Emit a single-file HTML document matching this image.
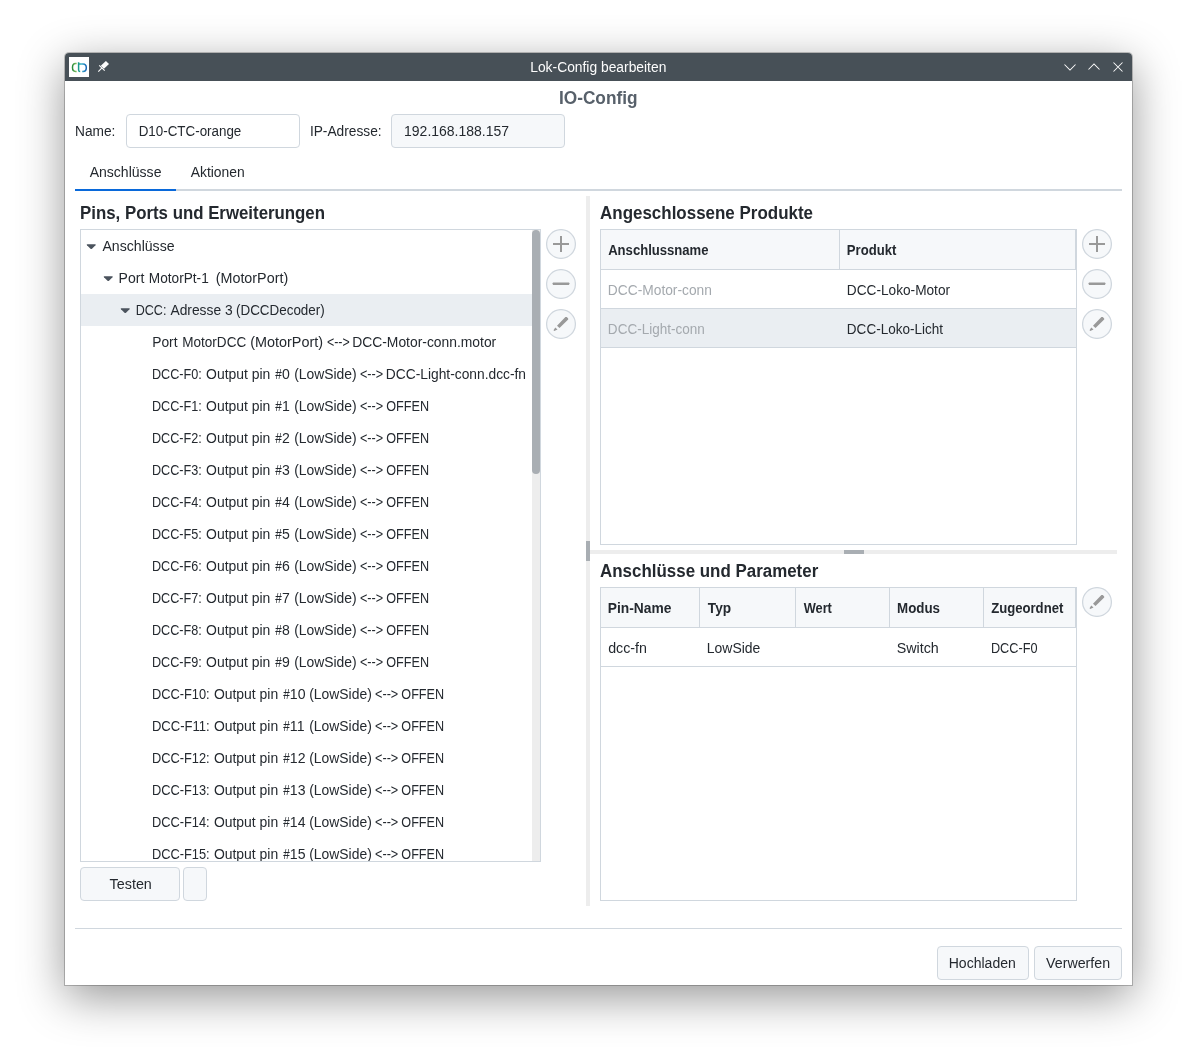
<!DOCTYPE html>
<html lang="de">
<head>
<meta charset="utf-8">
<title>Lok-Config bearbeiten</title>
<style>
*{box-sizing:border-box;margin:0;padding:0}
html,body{width:1197px;height:1062px;overflow:hidden;background:#fff}
body{position:relative;font-family:"Liberation Sans",sans-serif;font-size:14px;line-height:20px;color:#24292f}
div,span,svg{position:absolute}
.win{left:65px;top:53px;width:1067px;height:932px;background:#fff;border-radius:4px 4px 0 0;
 box-shadow:0 0 0 1px rgba(0,0,0,.22),0 12px 46px rgba(0,0,0,.42)}
.tbar{left:65px;top:53px;width:1067px;height:28px;background:#475057;border-radius:4px 4px 0 0}
.t{white-space:pre;line-height:20px;transform-origin:0 0}
.r{font-size:14px}
.b{font-size:14px;font-weight:bold}
.h{font-size:17.5px;font-weight:bold}
.tt{font-size:13.8px}
.inp{border:1px solid #d0d7de;border-radius:4px;background:#fff}
.btn{border:1px solid #d0d7de;border-radius:4px;background:#f6f8fa}
.box{border:1px solid #d0d7de;background:#fff}
.circ{width:30px;height:30px;border-radius:50%;border:1px solid #d0d7de;background:#f6f8fa}
.circ svg{left:-1px;top:-1px}
.sel{background:#eaeef2}
.th{height:40px;background:#f6f8fa;border-bottom:1px solid #d0d7de;border-right:1px solid #d0d7de}
.hl{height:1px;background:#d0d7de}
.arr{width:11px;height:6px}
.row{left:0;width:451px;height:32px}
</style>
</head>
<body>
<div class="win"></div>
<div class="tbar"></div>
<div style="left:69px;top:57px;width:20px;height:20px;background:#fff">
 <svg width="20" height="20" viewBox="0 0 20 20" style="left:0;top:0">
  <defs>
   <linearGradient id="g1" x1="0" y1="0" x2="1" y2="0"><stop offset="0" stop-color="#2a8c3c"/><stop offset="1" stop-color="#8cc663"/></linearGradient>
   <linearGradient id="g2" x1="0" y1="0" x2="1" y2="0"><stop offset="0" stop-color="#1a9a8c"/><stop offset=".35" stop-color="#3db4c8"/><stop offset="1" stop-color="#1766b8"/></linearGradient>
  </defs>
  <path d="M7.7 6.6 H6.6 Q3.5 6.6 3.5 10.6 Q3.5 14.5 6.6 14.5 H7.7" fill="none" stroke="url(#g1)" stroke-width="1.5"/>
  <path d="M9.6 5.2 V12.9 Q9.6 14.5 11.2 14.5" fill="none" stroke="#1a9a8c" stroke-width="1.5"/>
  <path d="M9.6 6.9 H14 Q17.3 6.9 17.3 10.7 Q17.3 14.5 14 14.5 H13.2" fill="none" stroke="url(#g2)" stroke-width="1.5"/>
 </svg>
</div>
<svg width="16" height="16" viewBox="0 0 16 16" style="left:96px;top:58px">
 <path d="M9.9 3.1 L13 6 L7.95 10.7 L4.8 7.75 Z" fill="#fcfcfc"/>
 <path d="M3.2 7.4 L8.7 12.65 M5.7 10.2 L2.3 13.6" stroke="#fcfcfc" stroke-width="1.1" fill="none"/>
</svg>
<svg width="70" height="16" viewBox="0 0 70 16" style="left:1060px;top:59px">
 <g fill="none" stroke="#fcfcfc" stroke-width="1.05">
  <path d="M4.5 5.5 L10 11 L15.5 5.5"/>
  <path d="M28.5 10.5 L34 5 L39.5 10.5"/>
  <path d="M53.5 3.5 L62.5 12.5 M62.5 3.5 L53.5 12.5"/>
 </g>
</svg>

<!-- inputs -->
<div class="inp" style="left:126px;top:114px;width:174px;height:34px"></div>
<div class="inp" style="left:391px;top:114px;width:174px;height:34px;background:#f6f8fa"></div>
<!-- tabs underline -->
<div style="left:75px;top:189px;width:1047px;height:2px;background:#d0d7de"></div>
<div style="left:75px;top:189px;width:101px;height:2px;background:#0969da"></div>

<!-- tree -->
<div class="box" style="left:80px;top:229px;width:461px;height:633px"></div>
<div style="left:81px;top:230px;width:459px;height:631px;overflow:hidden;will-change:transform">
 <div class="sel" style="left:0;top:64px;width:451px;height:32px"></div>
 <svg class="arr" style="left:5px;top:14px" viewBox="0 0 11 6"><path d="M1.4 .3 H9.1 Q10.3 .4 9.5 1.3 L6 4.7 Q5.25 5.3 4.5 4.7 L1 1.3 Q.2 .4 1.4 .3Z" fill="#4b535d"/></svg>
 <svg class="arr" style="left:22px;top:46px" viewBox="0 0 11 6"><path d="M1.4 .3 H9.1 Q10.3 .4 9.5 1.3 L6 4.7 Q5.25 5.3 4.5 4.7 L1 1.3 Q.2 .4 1.4 .3Z" fill="#4b535d"/></svg>
 <svg class="arr" style="left:39px;top:78px" viewBox="0 0 11 6"><path d="M1.4 .3 H9.1 Q10.3 .4 9.5 1.3 L6 4.7 Q5.25 5.3 4.5 4.7 L1 1.3 Q.2 .4 1.4 .3Z" fill="#4b535d"/></svg>
<div class="row" style="top:0px">
<span class="t r" style="left:21px;top:6px;transform:translateX(0.43px) scaleX(1.0076)">Anschlüsse</span>
</div>
<div class="row" style="top:32px">
<span class="t r" style="left:37px;top:6px;transform:translateX(0.61px) scaleX(1.0029)">Port </span><span class="t r" style="left:67px;top:6px;transform:translateX(0.85px) scaleX(0.9741)">MotorPt-1 </span><span class="t r" style="left:134px;top:6px;transform:translateX(0.71px) scaleX(1.0237)">(MotorPort)</span>
</div>
<div class="row" style="top:64px">
<span class="t r" style="left:54px;top:6px;transform:translateX(0.73px) scaleX(0.8956)">DCC: </span><span class="t r" style="left:89px;top:6px;transform:translateX(0.43px) scaleX(0.9859)">Adresse 3 </span><span class="t r" style="left:154px;top:6px;transform:translateX(0.98px) scaleX(0.9585)">(DCCDecoder)</span>
</div>
<div class="row" style="top:96px">
<span class="t r" style="left:71px;top:6px;transform:translateX(0.23px) scaleX(0.9865)">Port </span><span class="t r" style="left:101px;top:6px;transform:translateX(0.25px) scaleX(0.9669)">MotorDCC </span><span class="t r" style="left:169px;top:6px;transform:translateX(0.21px) scaleX(1.0281)">(MotorPort) </span><span class="t r" style="left:245px;top:6px;transform:translateX(0.88px) scaleX(0.8863)">&lt;--&gt; </span><span class="t r" style="left:271px;top:6px;transform:translateX(0.23px) scaleX(0.9899)">DCC-Motor-conn.motor</span>
</div>
<div class="row" style="top:128px">
<span class="t r" style="left:70px;top:6px;transform:translateX(0.93px) scaleX(0.9030)">DCC-F0: </span><span class="t r" style="left:125px;top:6px;transform:translateX(0.03px) scaleX(0.9959)">Output pin </span><span class="t r" style="left:194px;top:6px;transform:translateX(0.29px) scaleX(0.8331)">#</span><span class="t r" style="left:201px;top:6px;transform:translateX(0.00px) scaleX(1.0050)">0 </span><span class="t r" style="left:213px;top:6px;transform:translateX(0.15px) scaleX(0.9917)">(LowSide) </span><span class="t r" style="left:278px;top:6px;transform:translateX(0.97px) scaleX(0.9028)">&lt;--&gt; </span><span class="t r" style="left:304px;top:6px;transform:translateX(0.83px) scaleX(0.9847)">DCC-Light-conn.dcc-fn</span>
</div>
<div class="row" style="top:160px">
<span class="t r" style="left:70px;top:6px;transform:translateX(0.93px) scaleX(0.9030)">DCC-F1: </span><span class="t r" style="left:125px;top:6px;transform:translateX(0.03px) scaleX(0.9959)">Output pin </span><span class="t r" style="left:194px;top:6px;transform:translateX(0.29px) scaleX(0.8331)">#</span><span class="t r" style="left:201px;top:6px;transform:translateX(0.00px) scaleX(1.0050)">1 </span><span class="t r" style="left:213px;top:6px;transform:translateX(0.15px) scaleX(0.9917)">(LowSide) </span><span class="t r" style="left:278px;top:6px;transform:translateX(0.97px) scaleX(0.9028)">&lt;--&gt; </span><span class="t r" style="left:305px;top:6px;transform:translateX(0.20px) scaleX(0.9027)">OFFEN</span>
</div>
<div class="row" style="top:192px">
<span class="t r" style="left:70px;top:6px;transform:translateX(0.93px) scaleX(0.9030)">DCC-F2: </span><span class="t r" style="left:125px;top:6px;transform:translateX(0.03px) scaleX(0.9959)">Output pin </span><span class="t r" style="left:194px;top:6px;transform:translateX(0.29px) scaleX(0.8331)">#</span><span class="t r" style="left:201px;top:6px;transform:translateX(0.00px) scaleX(1.0050)">2 </span><span class="t r" style="left:213px;top:6px;transform:translateX(0.15px) scaleX(0.9917)">(LowSide) </span><span class="t r" style="left:278px;top:6px;transform:translateX(0.97px) scaleX(0.9028)">&lt;--&gt; </span><span class="t r" style="left:305px;top:6px;transform:translateX(0.20px) scaleX(0.9027)">OFFEN</span>
</div>
<div class="row" style="top:224px">
<span class="t r" style="left:70px;top:6px;transform:translateX(0.93px) scaleX(0.9030)">DCC-F3: </span><span class="t r" style="left:125px;top:6px;transform:translateX(0.03px) scaleX(0.9959)">Output pin </span><span class="t r" style="left:194px;top:6px;transform:translateX(0.29px) scaleX(0.8331)">#</span><span class="t r" style="left:201px;top:6px;transform:translateX(0.00px) scaleX(1.0050)">3 </span><span class="t r" style="left:213px;top:6px;transform:translateX(0.15px) scaleX(0.9917)">(LowSide) </span><span class="t r" style="left:278px;top:6px;transform:translateX(0.97px) scaleX(0.9028)">&lt;--&gt; </span><span class="t r" style="left:305px;top:6px;transform:translateX(0.20px) scaleX(0.9027)">OFFEN</span>
</div>
<div class="row" style="top:256px">
<span class="t r" style="left:70px;top:6px;transform:translateX(0.93px) scaleX(0.9030)">DCC-F4: </span><span class="t r" style="left:125px;top:6px;transform:translateX(0.03px) scaleX(0.9959)">Output pin </span><span class="t r" style="left:194px;top:6px;transform:translateX(0.29px) scaleX(0.8331)">#</span><span class="t r" style="left:201px;top:6px;transform:translateX(0.00px) scaleX(1.0050)">4 </span><span class="t r" style="left:213px;top:6px;transform:translateX(0.15px) scaleX(0.9917)">(LowSide) </span><span class="t r" style="left:278px;top:6px;transform:translateX(0.97px) scaleX(0.9028)">&lt;--&gt; </span><span class="t r" style="left:305px;top:6px;transform:translateX(0.20px) scaleX(0.9027)">OFFEN</span>
</div>
<div class="row" style="top:288px">
<span class="t r" style="left:70px;top:6px;transform:translateX(0.93px) scaleX(0.9030)">DCC-F5: </span><span class="t r" style="left:125px;top:6px;transform:translateX(0.03px) scaleX(0.9959)">Output pin </span><span class="t r" style="left:194px;top:6px;transform:translateX(0.29px) scaleX(0.8331)">#</span><span class="t r" style="left:201px;top:6px;transform:translateX(0.00px) scaleX(1.0050)">5 </span><span class="t r" style="left:213px;top:6px;transform:translateX(0.15px) scaleX(0.9917)">(LowSide) </span><span class="t r" style="left:278px;top:6px;transform:translateX(0.97px) scaleX(0.9028)">&lt;--&gt; </span><span class="t r" style="left:305px;top:6px;transform:translateX(0.20px) scaleX(0.9027)">OFFEN</span>
</div>
<div class="row" style="top:320px">
<span class="t r" style="left:70px;top:6px;transform:translateX(0.93px) scaleX(0.9030)">DCC-F6: </span><span class="t r" style="left:125px;top:6px;transform:translateX(0.03px) scaleX(0.9959)">Output pin </span><span class="t r" style="left:194px;top:6px;transform:translateX(0.29px) scaleX(0.8331)">#</span><span class="t r" style="left:201px;top:6px;transform:translateX(0.00px) scaleX(1.0050)">6 </span><span class="t r" style="left:213px;top:6px;transform:translateX(0.15px) scaleX(0.9917)">(LowSide) </span><span class="t r" style="left:278px;top:6px;transform:translateX(0.97px) scaleX(0.9028)">&lt;--&gt; </span><span class="t r" style="left:305px;top:6px;transform:translateX(0.20px) scaleX(0.9027)">OFFEN</span>
</div>
<div class="row" style="top:352px">
<span class="t r" style="left:70px;top:6px;transform:translateX(0.93px) scaleX(0.9030)">DCC-F7: </span><span class="t r" style="left:125px;top:6px;transform:translateX(0.03px) scaleX(0.9959)">Output pin </span><span class="t r" style="left:194px;top:6px;transform:translateX(0.29px) scaleX(0.8331)">#</span><span class="t r" style="left:201px;top:6px;transform:translateX(0.00px) scaleX(1.0050)">7 </span><span class="t r" style="left:213px;top:6px;transform:translateX(0.15px) scaleX(0.9917)">(LowSide) </span><span class="t r" style="left:278px;top:6px;transform:translateX(0.97px) scaleX(0.9028)">&lt;--&gt; </span><span class="t r" style="left:305px;top:6px;transform:translateX(0.20px) scaleX(0.9027)">OFFEN</span>
</div>
<div class="row" style="top:384px">
<span class="t r" style="left:70px;top:6px;transform:translateX(0.93px) scaleX(0.9030)">DCC-F8: </span><span class="t r" style="left:125px;top:6px;transform:translateX(0.03px) scaleX(0.9959)">Output pin </span><span class="t r" style="left:194px;top:6px;transform:translateX(0.29px) scaleX(0.8331)">#</span><span class="t r" style="left:201px;top:6px;transform:translateX(0.00px) scaleX(1.0050)">8 </span><span class="t r" style="left:213px;top:6px;transform:translateX(0.15px) scaleX(0.9917)">(LowSide) </span><span class="t r" style="left:278px;top:6px;transform:translateX(0.97px) scaleX(0.9028)">&lt;--&gt; </span><span class="t r" style="left:305px;top:6px;transform:translateX(0.20px) scaleX(0.9027)">OFFEN</span>
</div>
<div class="row" style="top:416px">
<span class="t r" style="left:70px;top:6px;transform:translateX(0.93px) scaleX(0.9030)">DCC-F9: </span><span class="t r" style="left:125px;top:6px;transform:translateX(0.03px) scaleX(0.9959)">Output pin </span><span class="t r" style="left:194px;top:6px;transform:translateX(0.29px) scaleX(0.8331)">#</span><span class="t r" style="left:201px;top:6px;transform:translateX(0.00px) scaleX(1.0050)">9 </span><span class="t r" style="left:213px;top:6px;transform:translateX(0.15px) scaleX(0.9917)">(LowSide) </span><span class="t r" style="left:278px;top:6px;transform:translateX(0.97px) scaleX(0.9028)">&lt;--&gt; </span><span class="t r" style="left:305px;top:6px;transform:translateX(0.20px) scaleX(0.9027)">OFFEN</span>
</div>
<div class="row" style="top:448px">
<span class="t r" style="left:70px;top:6px;transform:translateX(0.91px) scaleX(0.9163)">DCC-F10: </span><span class="t r" style="left:132px;top:6px;transform:translateX(0.88px) scaleX(0.9959)">Output pin </span><span class="t r" style="left:202px;top:6px;transform:translateX(0.14px) scaleX(0.8331)">#</span><span class="t r" style="left:208px;top:6px;transform:translateX(0.85px) scaleX(1.0050)">10 </span><span class="t r" style="left:228px;top:6px;transform:translateX(0.25px) scaleX(0.9917)">(LowSide) </span><span class="t r" style="left:294px;top:6px;transform:translateX(0.07px) scaleX(0.9028)">&lt;--&gt; </span><span class="t r" style="left:320px;top:6px;transform:translateX(0.30px) scaleX(0.9027)">OFFEN</span>
</div>
<div class="row" style="top:480px">
<span class="t r" style="left:70px;top:6px;transform:translateX(0.89px) scaleX(0.9316)">DCC-F11: </span><span class="t r" style="left:132px;top:6px;transform:translateX(0.88px) scaleX(0.9959)">Output pin </span><span class="t r" style="left:202px;top:6px;transform:translateX(0.14px) scaleX(0.8331)">#</span><span class="t r" style="left:208px;top:6px;transform:translateX(0.85px) scaleX(1.0050)">11 </span><span class="t r" style="left:228px;top:6px;transform:translateX(0.25px) scaleX(0.9917)">(LowSide) </span><span class="t r" style="left:294px;top:6px;transform:translateX(0.07px) scaleX(0.9028)">&lt;--&gt; </span><span class="t r" style="left:320px;top:6px;transform:translateX(0.30px) scaleX(0.9027)">OFFEN</span>
</div>
<div class="row" style="top:512px">
<span class="t r" style="left:70px;top:6px;transform:translateX(0.91px) scaleX(0.9163)">DCC-F12: </span><span class="t r" style="left:132px;top:6px;transform:translateX(0.88px) scaleX(0.9959)">Output pin </span><span class="t r" style="left:202px;top:6px;transform:translateX(0.14px) scaleX(0.8331)">#</span><span class="t r" style="left:208px;top:6px;transform:translateX(0.85px) scaleX(1.0050)">12 </span><span class="t r" style="left:228px;top:6px;transform:translateX(0.25px) scaleX(0.9917)">(LowSide) </span><span class="t r" style="left:294px;top:6px;transform:translateX(0.07px) scaleX(0.9028)">&lt;--&gt; </span><span class="t r" style="left:320px;top:6px;transform:translateX(0.30px) scaleX(0.9027)">OFFEN</span>
</div>
<div class="row" style="top:544px">
<span class="t r" style="left:70px;top:6px;transform:translateX(0.91px) scaleX(0.9163)">DCC-F13: </span><span class="t r" style="left:132px;top:6px;transform:translateX(0.88px) scaleX(0.9959)">Output pin </span><span class="t r" style="left:202px;top:6px;transform:translateX(0.14px) scaleX(0.8331)">#</span><span class="t r" style="left:208px;top:6px;transform:translateX(0.85px) scaleX(1.0050)">13 </span><span class="t r" style="left:228px;top:6px;transform:translateX(0.25px) scaleX(0.9917)">(LowSide) </span><span class="t r" style="left:294px;top:6px;transform:translateX(0.07px) scaleX(0.9028)">&lt;--&gt; </span><span class="t r" style="left:320px;top:6px;transform:translateX(0.30px) scaleX(0.9027)">OFFEN</span>
</div>
<div class="row" style="top:576px">
<span class="t r" style="left:70px;top:6px;transform:translateX(0.91px) scaleX(0.9163)">DCC-F14: </span><span class="t r" style="left:132px;top:6px;transform:translateX(0.88px) scaleX(0.9959)">Output pin </span><span class="t r" style="left:202px;top:6px;transform:translateX(0.14px) scaleX(0.8331)">#</span><span class="t r" style="left:208px;top:6px;transform:translateX(0.85px) scaleX(1.0050)">14 </span><span class="t r" style="left:228px;top:6px;transform:translateX(0.25px) scaleX(0.9917)">(LowSide) </span><span class="t r" style="left:294px;top:6px;transform:translateX(0.07px) scaleX(0.9028)">&lt;--&gt; </span><span class="t r" style="left:320px;top:6px;transform:translateX(0.30px) scaleX(0.9027)">OFFEN</span>
</div>
<div class="row" style="top:608px">
<span class="t r" style="left:70px;top:6px;transform:translateX(0.91px) scaleX(0.9163)">DCC-F15: </span><span class="t r" style="left:132px;top:6px;transform:translateX(0.88px) scaleX(0.9959)">Output pin </span><span class="t r" style="left:202px;top:6px;transform:translateX(0.14px) scaleX(0.8331)">#</span><span class="t r" style="left:208px;top:6px;transform:translateX(0.85px) scaleX(1.0050)">15 </span><span class="t r" style="left:228px;top:6px;transform:translateX(0.25px) scaleX(0.9917)">(LowSide) </span><span class="t r" style="left:294px;top:6px;transform:translateX(0.07px) scaleX(0.9028)">&lt;--&gt; </span><span class="t r" style="left:320px;top:6px;transform:translateX(0.30px) scaleX(0.9027)">OFFEN</span>
</div>
 <div style="left:451px;top:0;width:8px;height:631px;background:#ededed"></div>
 <div style="left:451px;top:0;width:8px;height:244px;border-radius:4px;background:#a9aeb3"></div>
</div>

<!-- circle buttons -->
<svg width="30" height="30" viewBox="0 0 30 30" style="left:546px;top:229px"><circle cx="15" cy="15" r="14.4" fill="#f6f8fa" stroke="#d0d7de" stroke-width="1.25"/><path d="M14 7 H16 V14 H23 V16 H16 V23 H14 V16 H7 V14 H14 Z" fill="#999"/></svg>
<svg width="30" height="30" viewBox="0 0 30 30" style="left:546px;top:269px"><circle cx="15" cy="15" r="14.4" fill="#f6f8fa" stroke="#d0d7de" stroke-width="1.25"/><path d="M6.3 14.2 L7.2 13.4 H22.8 L23.7 14.2 L22.9 16.1 H7.1 Z" fill="#999"/></svg>
<svg width="30" height="30" viewBox="0 0 30 30" style="left:546px;top:309px"><circle cx="15" cy="15" r="14.4" fill="#f6f8fa" stroke="#d0d7de" stroke-width="1.25"/><path d="M19.4 8 H20.8 L22.2 9.4 V10.6 L13.5 18.9 L11 16.7 Z M9.3 18.5 L11.5 20.6 L8.3 22 L7.5 21.2 Z" fill="#999"/></svg>
<svg width="30" height="30" viewBox="0 0 30 30" style="left:1082px;top:229px"><circle cx="15" cy="15" r="14.4" fill="#f6f8fa" stroke="#d0d7de" stroke-width="1.25"/><path d="M14 7 H16 V14 H23 V16 H16 V23 H14 V16 H7 V14 H14 Z" fill="#999"/></svg>
<svg width="30" height="30" viewBox="0 0 30 30" style="left:1082px;top:269px"><circle cx="15" cy="15" r="14.4" fill="#f6f8fa" stroke="#d0d7de" stroke-width="1.25"/><path d="M6.3 14.2 L7.2 13.4 H22.8 L23.7 14.2 L22.9 16.1 H7.1 Z" fill="#999"/></svg>
<svg width="30" height="30" viewBox="0 0 30 30" style="left:1082px;top:309px"><circle cx="15" cy="15" r="14.4" fill="#f6f8fa" stroke="#d0d7de" stroke-width="1.25"/><path d="M19.4 8 H20.8 L22.2 9.4 V10.6 L13.5 18.9 L11 16.7 Z M9.3 18.5 L11.5 20.6 L8.3 22 L7.5 21.2 Z" fill="#999"/></svg>
<svg width="30" height="30" viewBox="0 0 30 30" style="left:1082px;top:587px"><circle cx="15" cy="15" r="14.4" fill="#f6f8fa" stroke="#d0d7de" stroke-width="1.25"/><path d="M19.4 8 H20.8 L22.2 9.4 V10.6 L13.5 18.9 L11 16.7 Z M9.3 18.5 L11.5 20.6 L8.3 22 L7.5 21.2 Z" fill="#999"/></svg>

<!-- buttons -->
<div class="btn" style="left:80px;top:867px;width:100px;height:34px"></div>
<div class="btn" style="left:183px;top:867px;width:24px;height:34px"></div>
<div class="btn" style="left:937px;top:946px;width:92px;height:34px"></div>
<div class="btn" style="left:1034px;top:946px;width:88px;height:34px"></div>
<div class="hl" style="left:75px;top:928px;width:1047px"></div>

<!-- splitters -->
<div style="left:586px;top:196px;width:4px;height:710px;background:#ededed"></div>
<div style="left:586px;top:541px;width:4px;height:20px;background:#a9aeb3"></div>
<div style="left:590px;top:550px;width:527px;height:4px;background:#ededed"></div>
<div style="left:844px;top:550px;width:20px;height:4px;background:#a9aeb3"></div>

<!-- right top table -->
<div class="box" style="left:600px;top:229px;width:477px;height:316px"></div>
<div class="th" style="left:601px;top:230px;width:239px"></div>
<div class="th" style="left:840px;top:230px;width:236px"></div>
<div class="hl" style="left:601px;top:308px;width:475px"></div>
<div class="sel" style="left:601px;top:309px;width:475px;height:38px"></div>
<div class="hl" style="left:601px;top:347px;width:475px"></div>

<!-- right bottom table -->
<div class="box" style="left:600px;top:587px;width:477px;height:314px"></div>
<div class="th" style="left:601px;top:588px;width:99px"></div>
<div class="th" style="left:700px;top:588px;width:96px"></div>
<div class="th" style="left:796px;top:588px;width:94px"></div>
<div class="th" style="left:890px;top:588px;width:94px"></div>
<div class="th" style="left:984px;top:588px;width:92px"></div>
<div class="hl" style="left:601px;top:666px;width:475px"></div>

<div style="left:0;top:0;width:1197px;height:1062px;will-change:transform">
<span class="t tt" style="left:530px;top:58px;transform:translateX(0.24px) scaleX(1.0024);color:#fcfcfc">Lok-Config bearbeiten</span>
<span class="t h" style="left:558px;top:88px;transform:translateX(0.93px) scaleX(0.9857);color:#57606a">IO-Config</span>
<span class="t r" style="left:75px;top:121px;transform:translateX(0.04px) scaleX(0.9788)">Name:</span>
<span class="t r" style="left:138px;top:121px;transform:translateX(0.67px) scaleX(0.9559)">D10-CTC-orange</span>
<span class="t r" style="left:309px;top:121px;transform:translateX(0.90px) scaleX(0.9804)">IP-Adresse:</span>
<span class="t r" style="left:404px;top:121px;transform:translateX(0.08px) scaleX(0.9981)">192.168.188.157</span>
<span class="t r" style="left:89px;top:162px;transform:translateX(0.63px) scaleX(1.0033)">Anschlüsse</span>
<span class="t r" style="left:190px;top:162px;transform:translateX(0.73px) scaleX(0.9914)">Aktionen</span>
<span class="t h" style="left:80px;top:203px;transform:translateX(0.06px) scaleX(0.9615)">Pins, Ports und Erweiterungen</span>
<span class="t h" style="left:600px;top:203px;transform:translateX(0.06px) scaleX(0.9688)">Angeschlossene Produkte</span>
<span class="t h" style="left:600px;top:561px;transform:translateX(0.06px) scaleX(0.9670)">Anschlüsse und Parameter</span>
<span class="t b" style="left:608px;top:240px;transform:translateX(0.17px) scaleX(0.9343)">Anschlussname</span>
<span class="t b" style="left:846px;top:240px;transform:translateX(0.85px) scaleX(0.9352)">Produkt</span>
<span class="t r" style="left:607px;top:280px;transform:translateX(0.84px) scaleX(0.9836);color:#a4a9ae">DCC-Motor-conn</span>
<span class="t r" style="left:846px;top:280px;transform:translateX(0.84px) scaleX(0.9754)">DCC-Loko-Motor</span>
<span class="t r" style="left:607px;top:319px;transform:translateX(0.85px) scaleX(0.9669);color:#a4a9ae">DCC-Light-conn</span>
<span class="t r" style="left:846px;top:319px;transform:translateX(0.86px) scaleX(0.9652)">DCC-Loko-Licht</span>
<span class="t b" style="left:607px;top:598px;transform:translateX(0.80px) scaleX(0.9855)">Pin-Name</span>
<span class="t b" style="left:707px;top:598px;transform:translateX(0.82px) scaleX(0.9749)">Typ</span>
<span class="t b" style="left:803px;top:598px;transform:translateX(0.65px) scaleX(0.9149)">Wert</span>
<span class="t b" style="left:897px;top:598px;transform:translateX(0.03px) scaleX(0.9526)">Modus</span>
<span class="t b" style="left:991px;top:598px;transform:translateX(0.14px) scaleX(0.9374)">Zugeordnet</span>
<span class="t r" style="left:608px;top:638px;transform:translateX(0.14px) scaleX(1.0171)">dcc-fn</span>
<span class="t r" style="left:706px;top:638px;transform:translateX(0.82px) scaleX(0.9958)">LowSide</span>
<span class="t r" style="left:896px;top:638px;transform:translateX(0.65px) scaleX(1.0202)">Switch</span>
<span class="t r" style="left:990px;top:638px;transform:translateX(0.92px) scaleX(0.9071)">DCC-F0</span>
<span class="t r" style="left:109px;top:874px;transform:translateX(0.57px) scaleX(1.0247)">Testen</span>
<span class="t r" style="left:948px;top:953px;transform:translateX(0.71px) scaleX(1.0024)">Hochladen</span>
<span class="t r" style="left:1046px;top:953px;transform:translateX(0.02px) scaleX(1.0168)">Verwerfen</span>
</div>
</body>
</html>
